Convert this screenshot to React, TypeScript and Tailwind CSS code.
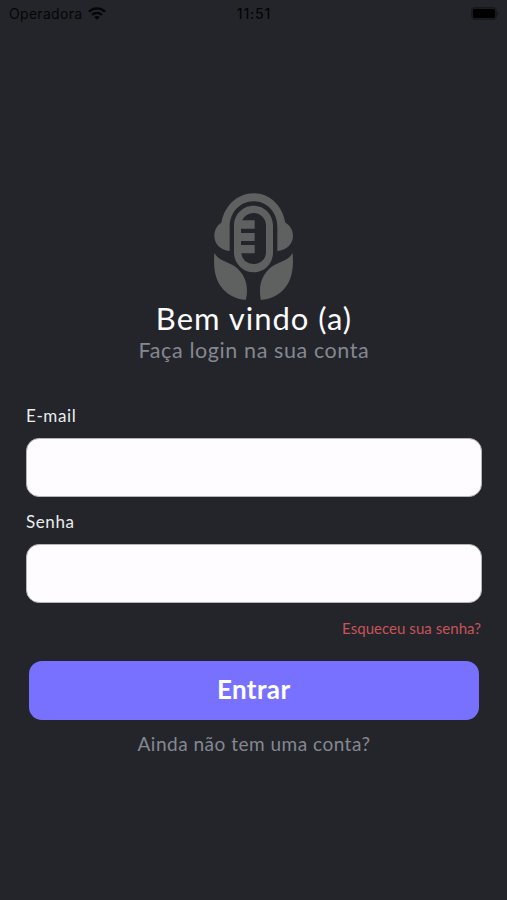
function Logo() {
  return (
    <svg className="mr-px h-[107px] w-[79px] shrink-0" viewBox="42 32 237 321" fill="#5f6060">
      <path d="M64 121C74 70 112 33 161 33C210 33 247 70 256 121C270 129 279 143 279 160C279 184 260 204 232 206V133C232 92 203 57 161 57C119 57 89 92 89 133V206C62 204 43 184 43 160C43 143 51 129 64 121Z" />
      <path
        fillRule="evenodd"
        d="M161 70C193 70 219 96 219 129V211C219 244 193 270 161 270C129 270 102 244 102 211V129C102 96 129 70 161 70ZM161 92C146 92 133 101 127 114H164V139H123V152H164V176H123V188H164V213H124C126 231 141 245 161 245C181 245 198 230 198 210V129C198 108 181 92 161 92Z"
      />
      <path d="M43 212C56 235 83 238 104 252C131 272 141 299 141 325C141 337 139 346 137 353C112 350 87 341 68 319C44 291 40 255 43 212Z" />
      <path d="M278 212C265 235 238 238 217 252C190 272 180 299 180 325C180 337 181 346 183 353C209 350 234 341 253 319C277 291 281 255 278 212Z" />
    </svg>
  );
}

function StatusBar() {
  return (
    <header className="grid h-7 w-full grid-cols-3 items-center pl-[9px] pr-[8px] font-['Inter','Liberation_Sans',sans-serif] text-[14px] leading-none text-[#050507]">
      <div className="flex items-center gap-[6px]">
        <span className="tracking-[0.3px]">Operadora</span>
        <svg className="h-[13px] w-[18px] -translate-y-px" viewBox="0 0 18 13" fill="none" stroke="#050507" strokeWidth="2.3">
          <path d="M1 4.6C5.6.2 12.4.2 17 4.6" />
          <path d="M4.1 7.8C6.9 5.1 11.1 5.1 13.9 7.8" />
          <path d="M9 12.8L6.2 10C7.8 8.6 10.2 8.6 11.8 10Z" fill="#050507" stroke="none" />
        </svg>
      </div>
      <span className="text-center font-medium tracking-[0.8px]">11:51</span>
      <svg className="h-[13px] w-[28px] -translate-y-px justify-self-end" viewBox="0 0 28 13">
        <rect x=".5" y=".5" width="25" height="12" rx="3" fill="#1b1c20" stroke="#17181c" />
        <rect x="2" y="2" width="22" height="9" rx="1.5" fill="#000" />
        <path d="M26.5 4.5Q28.5 6.5 26.5 8.5Z" fill="#121316" />
      </svg>
    </header>
  );
}

function Field({ id, label, type }: { id: string; label: string; type: string }) {
  return (
    <div className="flex flex-col">
      <label htmlFor={id} className="h-[34px] pt-px text-[17px] leading-[22px] tracking-[0.6px] text-[#ececee]">
        {label}
      </label>
      <input id={id} type={type} className="h-[59px] w-full rounded-[13px] border border-[#b5b4b9] bg-[#fefcfe] px-4 text-[#222429] outline-none" />
    </div>
  );
}

export default function App() {
  return (
    <div className="flex h-[900px] w-[507px] flex-col overflow-hidden bg-[#23252a] font-['Lato','Noto_Sans',sans-serif]">
      <StatusBar />
      <main className="flex flex-1 flex-col pl-[26px] pr-[25px] pt-[165px]">
        <div className="flex flex-col items-center">
          <Logo />
          <h1 className="-mt-px h-[38px] whitespace-nowrap text-[31px] leading-[38px] tracking-[1px] text-[#fbfbfd]">Bem vindo (a)</h1>
          <p className="h-[26px] whitespace-nowrap text-[21.5px] leading-[26px] tracking-[0.6px] text-[#858891]">Faça login na sua conta</p>
        </div>
        <form className="mt-[41px] flex flex-col gap-[13px]">
          <Field id="email" label="E-mail" type="email" />
          <Field id="senha" label="Senha" type="password" />
        </form>
        <a className="mr-px mt-[15px] self-end whitespace-nowrap text-[15px] leading-5 tracking-[0.05px] text-[#c75458]">Esqueceu sua senha?</a>
        <button className="ml-[2.5px] mr-[3px] mt-[22.5px] h-[59px] rounded-[13px] bg-[#7871ff] pb-[2px] text-[26px] leading-8 font-bold tracking-[0.4px] text-white">Entrar</button>
        <a className="mt-3 self-center whitespace-nowrap text-[19px] leading-6 tracking-[0.5px] text-[#858891]">Ainda não tem uma conta?</a>
      </main>
    </div>
  );
}
